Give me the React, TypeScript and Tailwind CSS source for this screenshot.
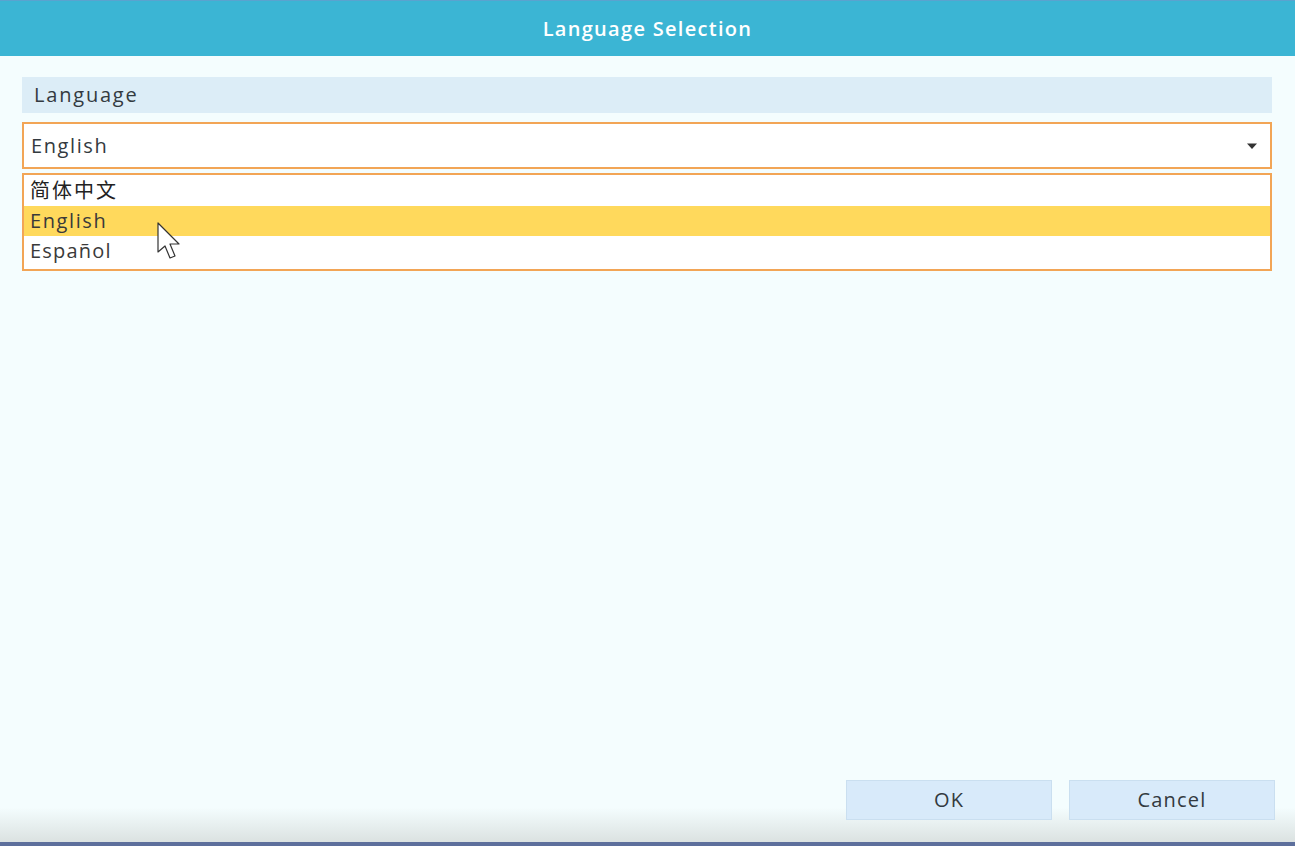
import React from "react";

export default function App() {
  const font = { fontFamily: '"Open Sans", "Noto Sans CJK SC", sans-serif' };
  return (
    <div className="w-[1295px] h-[846px] flex flex-col bg-[#f4fdfe] overflow-hidden" style={font}>
      <div className="h-[56px] shrink-0 bg-[#3bb5d4] border-t border-t-[#5aa3cf] flex items-center justify-center">
        <span className="text-white text-[20px] font-semibold tracking-[1.3px]">Language Selection</span>
      </div>
      <div className="flex-1 flex flex-col px-[22px] pr-[23px] pt-[21px]">
        <div className="h-[36px] bg-[#dcedf7] flex items-center pl-[12px]">
          <span className="text-[20px] text-[#333a40] tracking-[1.8px]">Language</span>
        </div>
        <div className="mt-[9px] h-[47px] border-2 border-[#f2a556] bg-white flex items-center justify-between pl-[7px] pr-[12px]">
          <span className="text-[20px] text-[#333a40] tracking-[1.6px]">English</span>
          <svg width="12" height="8" viewBox="0 0 12 8">
            <path d="M1 1.5 L11 1.5 L6 7 Z" fill="#333" />
          </svg>
        </div>
        <div className="mt-[4px] border-2 border-[#f2a556] bg-white flex flex-col pt-[1px] pb-[3px] relative">
          <div className="h-[30px] flex items-center pl-[6px]">
            <span className="text-[20px] text-[#222] tracking-[2px]">简体中文</span>
          </div>
          <div className="h-[30px] flex items-center pl-[6px] bg-[#ffd95c]">
            <span className="text-[20px] text-[#3a3a3a] tracking-[1.6px]">English</span>
          </div>
          <div className="h-[30px] flex items-center pl-[6px]">
            <span className="text-[20px] text-[#3a3a3a] tracking-[1.2px]">Español</span>
          </div>
          <svg className="absolute left-[133px] top-[47px]" width="26" height="42" viewBox="0 0 26 42">
            <path d="M1 1 L1 30 L8 24 L13 36 L18 34 L13 22 L22 22 Z" fill="#ffffff" stroke="#333" strokeWidth="1.2" strokeLinejoin="round" />
          </svg>
        </div>
        <div className="flex-1" />
      </div>
      <div className="h-[72px] shrink-0 bg-[linear-gradient(to_bottom,#f4fdfe_0%,#f4fdfe_52%,#dbe2e1_100%)] flex justify-end items-start pt-[10px] pr-[20px] gap-[17px]">
        <button className="w-[206px] h-[40px] bg-[#d8eafa] border border-[#cadff0] text-[20px] text-[#333a40] tracking-[1px] flex items-center justify-center">OK</button>
        <button className="w-[206px] h-[40px] bg-[#d8eafa] border border-[#cadff0] text-[20px] text-[#333a40] tracking-[1.2px] flex items-center justify-center">Cancel</button>
      </div>
      <div className="h-[4px] shrink-0 bg-[#5d6f9c]" />
    </div>
  );
}
